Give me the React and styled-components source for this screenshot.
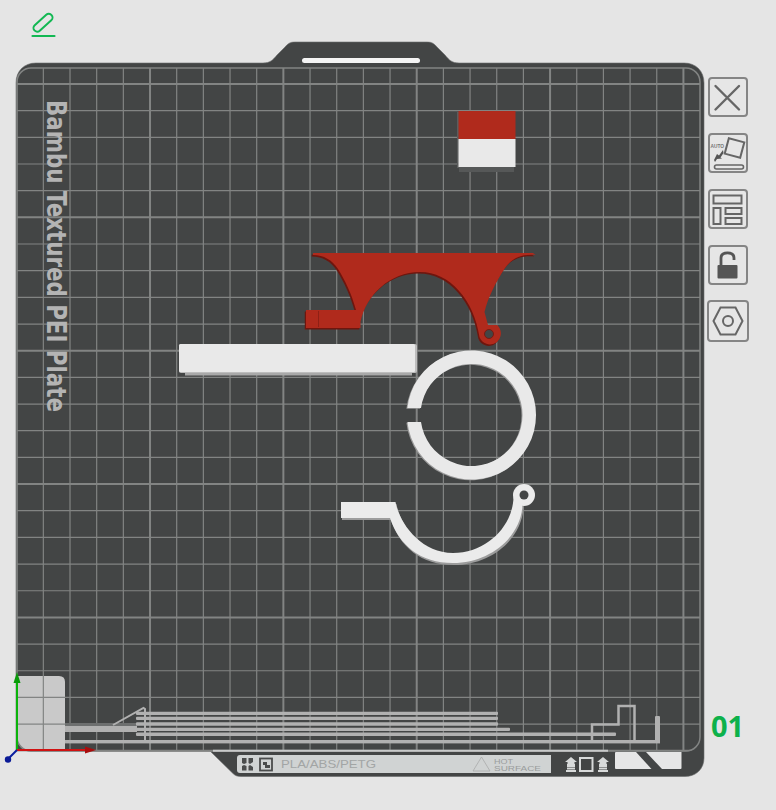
import React from "react";
import styled, { createGlobalStyle } from "styled-components";

const Global = createGlobalStyle`
  html, body { margin: 0; padding: 0; background: #e5e5e5; }
  body { font-family: "Open Sans", "Liberation Sans", sans-serif; }
`;
const Page = styled.div`
  width: 776px; height: 810px; display: flex; flex-direction: column;
  background: #e5e5e5; overflow: hidden;
`;
const Header = styled.header`
  height: 42px; padding-left: 30px; display: flex; align-items: flex-start;
`;
const EditButton = styled.button`
  width: 28px; height: 28px; margin-top: 12px; padding: 0; border: 0; background: none; display: block;
  svg { display: block; }
`;
const Main = styled.main`
  display: flex; padding-left: 16px; height: 734px;
`;
const PlateSvg = styled.svg`
  width: 688px; height: 734px; display: block; flex: none; overflow: visible;
`;
const Side = styled.aside`
  margin-left: 4px; padding: 35px 0 35px 0; width: 44px; display: flex; flex-direction: column;
  justify-content: space-between;
`;
const Tools = styled.div`
  display: flex; flex-direction: column; align-items: flex-start; gap: 16px;
`;
const Tool = styled.button`
  width: ${p => p.$big ? 42 : 40}px; height: ${p => p.$big ? 42 : 40}px;
  margin-left: ${p => p.$big ? -1 : 0}px;
  margin-top: ${p => p.$big ? -1 : 0}px;
  box-sizing: border-box; padding: 0; border: 2px solid #858585; border-radius: 4px; background: #e6e6e6;
  svg { display: block; margin: -2px; }
`;
const Index = styled.div`
  margin-left: 3px; font-family: "Open Sans", sans-serif; font-weight: 700; font-size: 29px; line-height: 30px;
  letter-spacing: 0; color: #0db14b;
`;

const vx = Array.from({ length: 26 }, (_, i) => 16.67 + 26.67 * i);
const hy = Array.from({ length: 26 }, (_, i) => 84 + 26.67 * i).filter(y => y < 752);
const isThickV = i => (i - 5) % 5 === 0 && i > 0;
const isThickH = i => i % 5 === 0;

const platePath = "M36 63 L263 63 C270 63 273 60 277 55 L285 47 C288 43.500 290 42 295 42 L427 42 C432 42 434 43.500 437 47 L445 55 C449 60 452 63 459 63 L684 63 C696 63 704 71 704 83 L704 758 C704 769 696 776.500 685 776.500 L241 776.500 C237 776.500 235 775.500 233 773.500 L210 751 L16 751 L16 83 C16 71 24 63 36 63 Z";
const redPath = "M313 253 L533 253 L535.500 255 C522 254 512 258 505 268 C496 282 488 297 484.500 312 L488 325 L497 325 A11 11 0 1 1 479.500 337 C474 300 450 272 420 272 C390 272 366 295 360.500 322 L360.500 328 L306 328 L306 310 L356 310 C352 295 345 280 338 269 C332 260 324 255 313 255 Z";
const hookPath = "M341 502 L395.500 502 C399 522 420 553 453 553 C488 553 513 525 513.500 497 L522.500 505 C521 537 490 563 453 563 C420 563 399 545 390 518 L341 518 Z";
const ringPath = "M407.400 408 A64.500 64.500 0 1 1 407.400 422 L421 422 A51 51 0 1 0 421 408 Z";

function Plate() {
  return (
    <PlateSvg viewBox="16 42 688 734" role="img">
      <defs>
        <clipPath id="gridClip"><rect x="17" y="68" width="683" height="683.500" rx="14" /></clipPath>
      </defs>
      <path d={platePath} fill="#434545" stroke="#6a6c6c" strokeWidth=".6" />
      <rect x="302" y="58" width="118" height="5" rx="2.500" fill="#f4f4f4" />

      <g clipPath="url(#gridClip)">
        <path d="M17 676 L59 676 Q65 676 65 682 L65 751 L17 751 Z" fill="#c9c9c9" />
        {vx.map((x, i) => (
          <line key={"v" + i} x1={x} x2={x} y1="68" y2="751" stroke="#828483" strokeWidth={isThickV(i) ? 2 : 1.200} />
        ))}
        {hy.map((y, i) => (
          <line key={"h" + i} x1="17" x2="700" y1={y} y2={y} stroke="#828483" strokeWidth={isThickH(i) ? 2 : 1.200} />
        ))}
      </g>
      <rect x="17" y="68" width="683" height="683" rx="14" fill="none" stroke="#828483" strokeWidth="1.500" />
      <path d="M16.500 680 L16.500 745 Q16.500 749 20 751 L16.500 751 Z" fill="#e5e5e5" />
      <line x1="213" x2="608" y1="750.800" y2="750.800" stroke="#c8caca" strokeWidth="2" />

      <g fill="#b1b1b1">
        <rect x="65" y="723" width="72" height="3" fill="#6d6f6f" />
        <rect x="65" y="726" width="72" height="6" />
        <rect x="136" y="711.700" width="362" height="3.400" rx="1" />
        <rect x="136" y="716.700" width="362" height="3.400" rx="1" />
        <rect x="136" y="722.300" width="362" height="3.400" rx="1" />
        <rect x="136" y="727.700" width="374" height="3.400" rx="1" />
        <rect x="136" y="732.500" width="480" height="3.400" rx="1" />
        <rect x="65" y="740" width="595" height="3.400" />
        <rect x="655" y="716" width="5" height="27" rx="1" />
      </g>
      <g fill="none" stroke="#b1b1b1">
        <path d="M113 725 L143.500 708 L145 709 L145 740" strokeWidth="2" />
        <path d="M592 741 L592 724.500 L618.500 724.500 L618.500 706 L634.500 706 L634.500 741" strokeWidth="2.500" />
      </g>

      <text
        transform="translate(47 100) rotate(90)"
        fontFamily="'DejaVu Sans', sans-serif"
        fontWeight="700"
        fontSize="26"
        fill="#b4b4b4"
        textLength="312"
        lengthAdjust="spacingAndGlyphs"
      >Bambu Textured PEI Plate</text>

      {/* Red cube */}
      <rect x="457" y="112" width="3" height="56" fill="#5b5d5d" />
      <rect x="459" y="167" width="55" height="5" fill="#565858" />
      <rect x="458.500" y="111" width="57" height="28" fill="#b02a1c" />
      <rect x="458.500" y="139" width="57" height="28" fill="#e9e9e9" />

      {/* Red part */}
      <path d={redPath} fill="#6e160e" transform="translate(-1.200 1.500)" />
      <path d={redPath} fill="#b02a1c" />
      <line x1="318.500" x2="318.500" y1="311" y2="327" stroke="#8f2015" strokeWidth="1" />
      <circle cx="489" cy="334" r="4.500" fill="#434545" stroke="#7a1a10" strokeWidth="1" />

      {/* White bar */}
      <rect x="185" y="372" width="227" height="3.500" fill="#a9a9a9" />
      <rect x="179" y="344" width="238" height="29" rx="2" fill="#bdbdbd" />
      <rect x="179" y="344" width="236" height="28" rx="1.500" fill="#e9e9e9" />

      {/* Ring */}
      <path d={ringPath} fill="#9a9a9a" transform="translate(-1 .8)" />
      <path d={ringPath} fill="#e9e9e9" />

      {/* Hook */}
      <path d={hookPath} fill="#9c9c9c" transform="translate(1 2)" />
      <path d={hookPath} fill="#ebebeb" />
      <circle cx="524" cy="495" r="11" fill="#ebebeb" />
      <circle cx="524" cy="495" r="4.500" fill="#434545" />

      {/* Axes */}
      <line x1="17" x2="17" y1="750" y2="676" stroke="#0bb40b" strokeWidth="2" />
      <path d="M17 672 L20.500 683 L13.500 683 Z" fill="#0a9a0a" />
      <line x1="17" x2="90" y1="750" y2="750" stroke="#d01212" strokeWidth="2" />
      <path d="M96 750 L85 746.500 L85 753.500 Z" fill="#a80d0d" />
      <line x1="17" x2="8" y1="750" y2="759" stroke="#0a1ea0" strokeWidth="2" />
      <circle cx="8" cy="759.500" r="3.200" fill="#0a1a96" />

      {/* Bottom label */}
      <path d="M240 755 L551 755 L551 773 L240 773 Q237 773 237 770 L237 758 Q237 755 240 755 Z" fill="#d0d3d3" />
      <g fill="#4a4c4c">
        <path d="M242 758 L246.500 758 L246.500 763 L244 764 L242 763 Z" />
        <path d="M248.500 758 L253 758 L253 762 L250 764 L248.500 763 Z" />
        <path d="M244 765 L246.500 766 L246.500 770.500 L242 770.500 L242 766 Z" />
        <path d="M250 765 L253 767 L253 770.500 L248.500 770.500 L248.500 766 Z" />
      </g>
      <rect x="260" y="758.500" width="12" height="12" fill="none" stroke="#4a4c4c" strokeWidth="1.800" />
      <path d="M263 762 L267 762 L267 765 L270 765 L270 768 L265 768 L265 765 L263 765 Z" fill="#4a4c4c" />
      <text x="281" y="768" fontFamily="'Liberation Sans', sans-serif" fontSize="11" fill="#a2a5a5" textLength="95" lengthAdjust="spacingAndGlyphs">PLA/ABS/PETG</text>
      <path d="M481.500 757 L490 771 L473 771 Z" fill="none" stroke="#a9abab" strokeWidth=".8" />
      <text x="494" y="763.500" fontFamily="'Liberation Sans', sans-serif" fontSize="6.500" fill="#9a9d9d" textLength="19" lengthAdjust="spacingAndGlyphs">HOT</text>
      <text x="494" y="771" fontFamily="'Liberation Sans', sans-serif" fontSize="6.500" fill="#9a9d9d" textLength="47" lengthAdjust="spacingAndGlyphs">SURFACE</text>

      <g fill="#d8dada">
        <path d="M571 757 L577 762 L574.500 762 L574.500 764 L567.500 764 L567.500 762 L565 762 Z" />
        <rect x="567" y="764" width="8" height="3" />
        <rect x="567" y="767.500" width="8" height="2" />
        <rect x="566" y="770" width="10" height="2" />
        <path d="M603 757 L609 762 L606.500 762 L606.500 764 L599.500 764 L599.500 762 L597 762 Z" />
        <rect x="599" y="764" width="8" height="3" />
        <rect x="599" y="767.500" width="8" height="2" />
        <rect x="598" y="770" width="10" height="2" />
      </g>
      <rect x="580" y="758" width="12.500" height="13" fill="none" stroke="#d8dada" strokeWidth="2" />

      <path d="M616 752 L636 752 L651.500 769 L616 769 Q615 769 615 768 L615 753 Q615 752 616 752 Z" fill="#e6e6e6" />
      <path d="M646 752 L681.500 752 L681.500 768 Q681.500 769 680.500 769 L662 769 Z" fill="#e6e6e6" />
    </PlateSvg>
  );
}

const IconSvg = ({ children, size = 40 }) => (
  <svg width={size} height={size} viewBox={`0 0 ${size} ${size}`} fill="none" stroke="#666" strokeWidth="1.500">{children}</svg>
);

export default function App() {
  return (
    <Page>
      <Global />
      <Header>
        <EditButton aria-label="Rename">
          <svg width="28" height="28" viewBox="30 12 28 28" fill="none" stroke="#12b853">
            <rect x="31.500" y="19" width="23" height="7.500" rx="3.750" transform="rotate(-42 43 22.750)" strokeWidth="2" />
            <line x1="32.500" x2="54.500" y1="36" y2="36" strokeWidth="2.200" strokeLinecap="round" />
          </svg>
        </EditButton>
      </Header>
      <Main>
        <Plate />
        <Side>
          <Tools>
            <Tool aria-label="Close">
              <IconSvg>
                <path d="M7.500 9 L31 32.500 M31 9 L7.500 32.500" strokeWidth="2.400" strokeLinecap="round" />
              </IconSvg>
            </Tool>
            <Tool aria-label="Auto orient">
              <IconSvg>
                <rect x="18.500" y="7" width="16" height="16" transform="rotate(15 26.500 15)" strokeWidth="2" />
                <rect x="6.500" y="32" width="29" height="4" rx="2" strokeWidth="1.600" />
                <text x="2.500" y="14.500" fontFamily="'Liberation Sans', sans-serif" fontWeight="700" fontSize="5.500" fill="#777" stroke="none" textLength="13.500" lengthAdjust="spacingAndGlyphs">AUTO</text>
                <path d="M6 27 L9 21 L11 22.500 L15 17 L15.500 20 L12.500 24.500 L14 25.500 L9 26 L7 29 Z" fill="#555" stroke="none" />
              </IconSvg>
            </Tool>
            <Tool aria-label="Arrange">
              <IconSvg>
                <rect x="5.500" y="6.500" width="28" height="8" strokeWidth="2" />
                <rect x="5.500" y="19" width="7" height="16" strokeWidth="2" />
                <rect x="17.500" y="19" width="16" height="6" strokeWidth="2" />
                <rect x="17.500" y="29" width="16" height="6" strokeWidth="2" />
              </IconSvg>
            </Tool>
            <Tool aria-label="Lock">
              <IconSvg>
                <rect x="9.500" y="20" width="20" height="13.500" rx="1" fill="#555" stroke="none" />
                <path d="M13 20 L13 13 Q13 7.800 19.500 7.800 Q26 7.800 26 13 L26 15" stroke="#555" strokeWidth="2.800" />
              </IconSvg>
            </Tool>
            <Tool aria-label="Plate settings" $big>
              <IconSvg size={42}>
                <path d="M13.500 7.500 L28.500 7.500 L35.500 21 L28.500 34.500 L13.500 34.500 L6.500 21 Z" strokeWidth="2" />
                <circle cx="21" cy="21" r="5" strokeWidth="2" />
              </IconSvg>
            </Tool>
          </Tools>
          <Index>01</Index>
        </Side>
      </Main>
    </Page>
  );
}
